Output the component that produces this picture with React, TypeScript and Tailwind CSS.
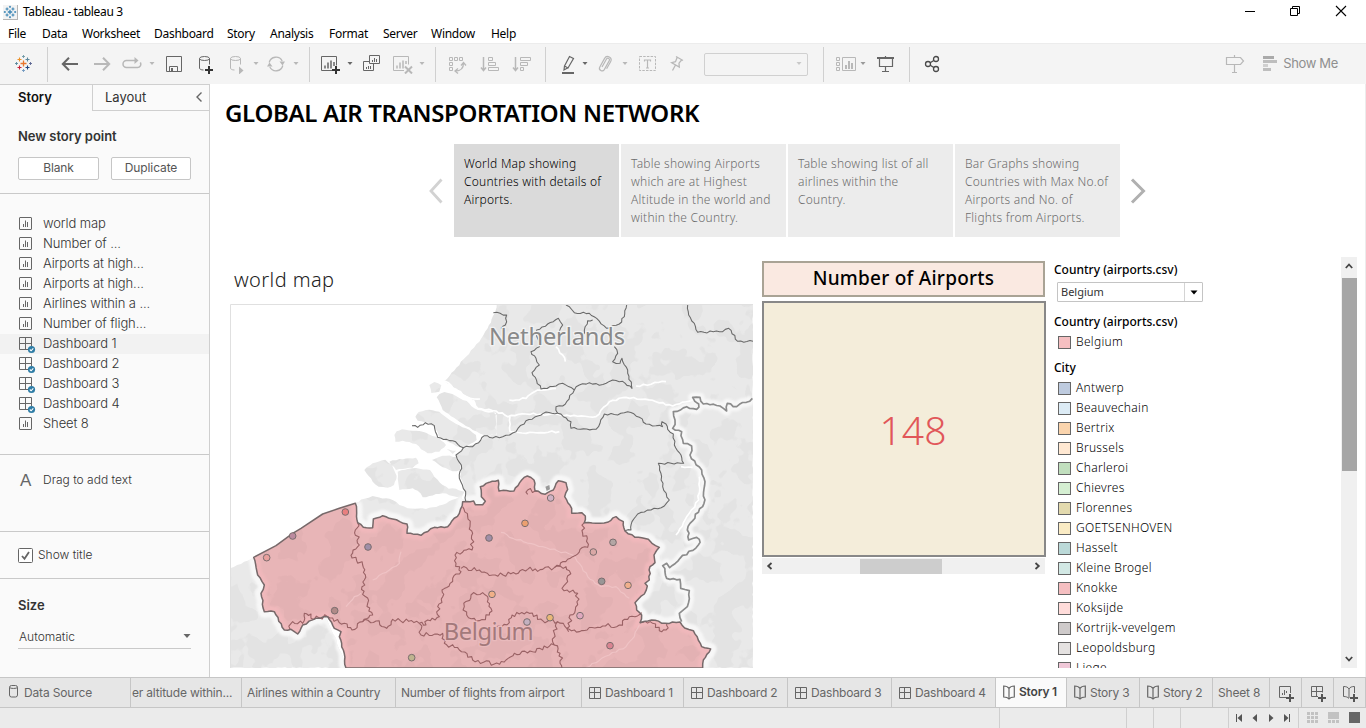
import React from "react";

type IconProps = { children: React.ReactNode; className?: string };

const ToolIcon = ({ children, className = "" }: IconProps) => (
  <svg width="20" height="20" viewBox="0 0 20 20" fill="none" stroke="currentColor" className={`shrink-0 ${className}`}>
    {children}
  </svg>
);

const Caret = ({ className = "" }: { className?: string }) => (
  <svg width="8" height="4" viewBox="0 0 8 4" fill="currentColor" className={`shrink-0 ${className}`}>
    <path d="M1.5 0h5L4 3z" />
  </svg>
);

const Sep = ({ className = "" }: { className?: string }) => (
  <div className={`h-[35px] w-px shrink-0 bg-[#d0d0d0] ${className}`} />
);

const plus = (x: number, y: number, s = 4) => (
  <path d={`M${x - s} ${y}h${2 * s}M${x} ${y - s}v${2 * s}`} stroke="#333" strokeWidth="2" />
);

const LogoMark = ({ mono }: { mono?: boolean }) => {
  const c = (v: string) => (mono ? "#3c86b5" : v);
  const cross = (x: number, y: number, s: number, col: string, w: number) => (
    <path d={`M${x - s} ${y}h${2 * s}M${x} ${y - s}v${2 * s}`} stroke={c(col)} strokeWidth={mono ? w * 1.35 : w} />
  );
  return (
    <>
      {cross(9.5, 9.5, 3, "#e8762d", 1.3)}
      {cross(5.5, 5.5, 2, "#eb9129", 1.1)}
      {cross(13.5, 5.5, 2, "#5b879b", 1.1)}
      {cross(5.5, 13.5, 2, "#c72037", 1.1)}
      {cross(13.5, 13.5, 2, "#1f447e", 1.1)}
      {cross(9.5, 2.5, 1.4, "#7099a6", 1)}
      {cross(9.5, 16.5, 1.4, "#7199c0", 1)}
      {cross(2.5, 9.5, 1.4, "#59879b", 1)}
      {cross(16.5, 9.5, 1.4, "#5c6692", 1)}
    </>
  );
};

const menus: [string, string][] = [
  ["File", "w-[34px]"],
  ["Data", "w-[40px]"],
  ["Worksheet", "w-[72px]"],
  ["Dashboard", "w-[73px]"],
  ["Story", "w-[43px]"],
  ["Analysis", "w-[59px]"],
  ["Format", "w-[54px]"],
  ["Server", "w-[48px]"],
  ["Window", "w-[60px]"],
  ["Help", "w-[40px]"],
];

function TitleBar() {
  return (
    <div className="flex h-6 items-center text-black">
      <div className="ml-[3px] flex h-[15px] w-[15px] items-center justify-center border-r border-b border-[#b5b5b5] bg-[#f3f3f3]">
        <svg width="14" height="14" viewBox="0 0 19 19">
          <LogoMark mono />
        </svg>
      </div>
      <span className="ml-[5px] text-[12px] tracking-[-0.35px]">Tableau - tableau 3</span>
      <svg className="mr-[19px] mb-[3px] ml-auto" width="102" height="12" viewBox="0 0 102 12" fill="none" stroke="#000">
        <path d="M0 6.500h10" />
        <path d="M45.500 3.500h7v7h-7zM47.500 3.500v-2h7v7h-2" />
        <path d="M91 1l10 10M101 1l-10 10" strokeWidth="1.100" />
      </svg>
    </div>
  );
}

function Toolbar() {
  return (
    <div className="flex h-[41px] items-center border-t border-[#ececec] bg-[#f4f4f4] text-[#b8b8b8]">
      <ToolIcon className="ml-[14px]">
        <LogoMark />
      </ToolIcon>
      <Sep className="ml-[13px]" />
      <ToolIcon className="ml-3 text-[#666]">
        <path d="M18 10H3M9 3.800L2.800 10L9 16.200" strokeWidth="2" />
      </ToolIcon>
      <ToolIcon className="ml-3">
        <path d="M2 10h15M11 3.800l6.200 6.200l-6.200 6.200" strokeWidth="2" />
      </ToolIcon>
      <ToolIcon className="ml-[10px]">
        <path d="M14 6.500H4.500a3.500 3.500 0 0 0 0 7H15.500a3.300 3.300 0 0 0 2.800-5" strokeWidth="1.500" />
        <path d="M12.500 3l4 3.500l-4 3.500z" fill="currentColor" stroke="none" />
      </ToolIcon>
      <Caret className="ml-[6px]" />
      <ToolIcon className="ml-2 text-[#666]">
        <path d="M2.500 2.500h15v15h-15zM5.500 17.500v-5h8v5" />
        <path d="M7 14h2v3h-2z" fill="currentColor" stroke="none" />
      </ToolIcon>
      <ToolIcon className="ml-3 text-[#666]">
        <ellipse cx="8.500" cy="4.500" rx="5" ry="2" />
        <path d="M3.500 4.500v9.500c0 1.200 1.500 2 4 2M13.500 4.500v6" />
        {plus(13, 16)}
      </ToolIcon>
      <ToolIcon className="ml-[10px]">
        <ellipse cx="9.500" cy="4.500" rx="5" ry="2" />
        <path d="M4.500 4.500v9.500c0 1.200 1.500 2 4 2M14.500 4.500v6" />
        <path d="M13 12.500l4.500 4l-4.500 4z" fill="currentColor" stroke="none" />
      </ToolIcon>
      <Caret className="ml-[6px]" />
      <ToolIcon className="ml-[6px]">
        <path d="M3.200 8.500a7 7 0 0 1 13-1.500M16.800 11.500a7 7 0 0 1-13 1.500" strokeWidth="1.300" />
        <path d="M13.500 7.500h5.500l-2.500 4zM6.500 12.500H1l2.500-4z" fill="currentColor" stroke="none" />
      </ToolIcon>
      <Caret className="ml-[6px]" />
      <Sep className="ml-[9px]" />
      <ToolIcon className="ml-[11px] text-[#666]">
        <path d="M11.500 16.500h-11v-14h15v9" />
        <path d="M4 14.500v-3M7 14.500v-6M10 14.500v-8M13 12v-4" strokeWidth="1.500" />
        {plus(15, 16)}
      </ToolIcon>
      <Caret className="ml-[5px] text-[#666]" />
      <ToolIcon className="ml-2 text-[#666]">
        <path d="M7.500 1.500h10v8h-10zM7.500 7.500h-6v9h10v-7" />
        <path d="M10.500 8v-2M12.500 8v-4M14.500 8v-3M4.500 15v-2M6.500 15v-3M8.500 15v-3" />
      </ToolIcon>
      <ToolIcon className="ml-[11px]">
        <path d="M11 16.500H.500v-14h15v8" />
        <path d="M4 14.500v-3M7 14.500v-6M10 14.500v-8M13 10v-3" strokeWidth="1.500" />
        <path d="M12 12.500l7 7M19 12.500l-7 7" strokeWidth="2" />
      </ToolIcon>
      <Caret className="ml-[5px]" />
      <Sep className="ml-[9px]" />
      <ToolIcon className="ml-[11px]">
        <path d="M2.500 3.500h3v3h-3zM7.500 3.500h3v3h-3zM12.500 3.500h3v3h-3zM2.500 8.500h3v3h-3zM2.500 13.500h3v3h-3z" />
        <path d="M8.500 17c5 0 8-3 8-8M14 11.500l2.500-3l2.500 3M11 14.500l-3 2.500l3 2.500" strokeWidth="1.300" />
      </ToolIcon>
      <ToolIcon className="ml-[13px]">
        <path d="M3.500 3v13M1 13.500l2.500 3l2.500-3" strokeWidth="1.500" />
        <path d="M8.500 3.500h4v3h-4zM8.500 8.500h7v3h-7zM8.500 13.500h10v3h-10z" />
      </ToolIcon>
      <ToolIcon className="ml-3">
        <path d="M3.500 3v13M1 13.500l2.500 3l2.500-3" strokeWidth="1.500" />
        <path d="M8.500 3.500h10v3h-10zM8.500 8.500h7v3h-7zM8.500 13.500h3v3h-3z" />
      </ToolIcon>
      <Sep className="ml-[13px]" />
      <ToolIcon className="ml-3 text-[#666]">
        <path d="M11.500 2.500l4 2l-5.500 9.500l-3.500-2zM6.500 12l-.500 4l3.500-2" strokeWidth="1.200" />
        <path d="M4 19h12" strokeWidth="2" />
      </ToolIcon>
      <Caret className="ml-[3px] text-[#666]" />
      <ToolIcon className="ml-[6px]">
        <path d="M7 13l4.500-8a1.600 1.600 0 0 1 2.800 1.600l-5 9a2.600 2.600 0 0 1-4.500-2.600l4.800-8.600a3.400 3.400 0 0 1 6 3.400l-4 7" strokeWidth="1.200" />
      </ToolIcon>
      <Caret className="ml-[6px]" />
      <ToolIcon className="ml-[9px]">
        <path d="M1.500 2.500h16v14h-16z" strokeDasharray="2.500 1.200" />
        <path d="M6.500 7.500v-1.500h6v1.500M9.500 6v8M8 14h3" strokeWidth="1.200" />
      </ToolIcon>
      <ToolIcon className="ml-[9px]">
        <path d="M9 2.500l7 4M10.200 3.200l-1.700 4.500l-3.800 1l7.600 4.400l-.300-3.900l3-3.700M8.500 11l-3 5.500" strokeWidth="1.300" />
      </ToolIcon>
      <div className="ml-[17px] flex h-[23px] w-[104px] shrink-0 items-center justify-end rounded-[2px] border border-[#d0d0d0] pr-1 text-[#c8c8c8]">
        <Caret />
      </div>
      <Sep className="ml-[15px]" />
      <ToolIcon className="ml-3">
        <path d="M.500 3.500h3v3h-3zM.500 8.500h3v3h-3zM.500 13.500h3v3h-3zM6.500 3.500h13v13h-13z" />
        <path d="M10 15v-4M13 15v-8M16 15v-6" strokeWidth="2" />
      </ToolIcon>
      <Caret className="ml-[3px] text-[#999]" />
      <ToolIcon className="ml-[9px] text-[#666]">
        <path d="M1 4h17" strokeWidth="2" />
        <path d="M3.500 4v8.500h13V4M9.500 2v2M9.500 12.500v5M6 17.500h7" strokeWidth="1.200" />
      </ToolIcon>
      <Sep className="ml-[13px]" />
      <ToolIcon className="ml-3 text-[#4a4a4a]">
        <circle cx="6" cy="10" r="2.500" strokeWidth="1.300" />
        <circle cx="14" cy="5" r="2.500" strokeWidth="1.300" />
        <circle cx="14" cy="15" r="2.500" strokeWidth="1.300" />
        <path d="M8.200 8.800l3.600-2.300M8.200 11.200l3.600 2.300" strokeWidth="1.300" />
      </ToolIcon>
      <ToolIcon className="ml-auto">
        <path d="M1.500 3.500h14l3 3.500l-3 3.500h-14zM9.500 1v2.500M9.500 10.500v8M7 18.500h5" strokeWidth="1.200" />
      </ToolIcon>
      <svg className="ml-[18px]" width="14" height="16" viewBox="0 0 14 16">
        <path d="M0 0h11v3H0z" fill="#aaa" />
        <path d="M0 4h14v3H0zM0 12h8v3H0z" fill="#bebebe" />
        <path d="M0 8h5v3H0z" fill="#d0d0d0" />
      </svg>
      <span className="mr-[28px] ml-[6px] font-['Inter','Liberation_Sans',sans-serif] text-[13px] tracking-[-0.35px] text-[#8f8f8f]">
        Show Me
      </span>
    </div>
  );
}

const SheetIcon = () => (
  <svg width="14" height="14" viewBox="0 0 14 14" fill="none" stroke="#666" className="shrink-0">
    <rect x=".5" y=".5" width="12" height="12" rx=".5" />
    <path d="M4.500 10V7M6.500 10V3.500M8.500 10V5" />
  </svg>
);

const GridIcon = ({ published }: { published?: boolean }) => (
  <svg width="17" height="17" viewBox="0 0 17 17" fill="none" stroke="#666" className="shrink-0">
    <path d="M.5.500h12v12H.500zM6.500.500v12M.500 6.500h12" />
    {published && (
      <>
        <circle cx="12.500" cy="12.500" r="3.600" fill="#2e7ca5" stroke="none" />
        <path d="M10.800 12.500l1.300 1.300l2.200-2.500" stroke="#fff" strokeWidth="1.100" />
      </>
    )}
  </svg>
);

const sheets: [string, boolean][] = [
  ["world map", false],
  ["Number of ...", false],
  ["Airports at high...", false],
  ["Airports at high...", false],
  ["Airlines within a ...", false],
  ["Number of fligh...", false],
  ["Dashboard 1", true],
  ["Dashboard 2", true],
  ["Dashboard 3", true],
  ["Dashboard 4", true],
  ["Sheet 8", false],
];

function SidePanel() {
  return (
    <aside className="flex w-[210px] shrink-0 flex-col border-t border-r border-[#cfcfcf] bg-[#fafafa] font-['Inter','Liberation_Sans',sans-serif] text-[13px] text-[#333]">
      <div className="flex h-[26px] shrink-0">
        <div className="w-[92px] pt-[3px] pl-[18px] font-semibold text-[#111]">Story</div>
        <div className="flex flex-1 items-start justify-between border-b border-l border-[#cfcfcf] pt-[3px] pr-[6px] pl-3">
          <span>Layout</span>
          <svg width="8" height="12" viewBox="0 0 8 12" fill="none" stroke="#666" strokeWidth="1.400" className="mt-[3px]">
            <path d="M6.500 1.500L2 6l4.500 4.500" />
          </svg>
        </div>
      </div>
      <div className="h-[83px] shrink-0 border-b border-[#c9c9c9] px-[18px] pt-4">
        <div className="font-semibold tracking-[-0.05px] text-[#333]">New story point</div>
        <div className="mt-[10px] flex gap-3 text-[12px] tracking-[-0.1px] text-[#555]">
          <div className="flex h-[23px] w-[81px] items-center justify-center rounded-[2px] border border-[#c6c6c6] bg-white">Blank</div>
          <div className="flex h-[23px] w-[80px] items-center justify-center rounded-[2px] border border-[#c6c6c6] bg-white">Duplicate</div>
        </div>
      </div>
      <div className="h-[261px] shrink-0 border-b border-[#c9c9c9] pt-5 font-light">
        {sheets.map(([name, dash], i) => (
          <div key={i} className={`flex h-5 items-center ${i === 6 ? "bg-[#f2f2f2]" : ""}`}>
            <span className="flex h-5 w-[43px] shrink-0 pt-[3px] pl-[19px]">{dash ? <GridIcon published /> : <SheetIcon />}</span>
            <span className="tracking-[-0.12px]">{name}</span>
          </div>
        ))}
      </div>
      <div className="flex h-[77px] shrink-0 border-b border-[#c9c9c9] pt-4 text-[12px] text-[#333]">
        <span className="w-[43px] pl-5 font-['Liberation_Sans',sans-serif] text-[17px] leading-[20px] text-[#666]">A</span>
        <span className="leading-[18px] font-light">Drag to add text</span>
      </div>
      <div className="flex h-[47px] shrink-0 items-center gap-[5px] border-b border-[#c9c9c9] pl-[18px] text-[12px] text-[#333]">
        <svg width="15" height="15" viewBox="0 0 15 15" fill="#fff" stroke="#666">
          <rect x=".5" y=".5" width="14" height="14" rx="1" />
          <path d="M4 8l2.500 2.800L11 4" fill="none" strokeWidth="1.800" />
        </svg>
        <span className="font-light">Show title</span>
      </div>
      <div className="px-[18px] pt-[17px]">
        <div className="text-[13px] font-semibold text-[#333]">Size</div>
        <div className="mt-[10px] flex h-[23px] items-center justify-between border-b border-[#c9c9c9] pl-px text-[12px] text-[#333]">
          <span className="font-light">Automatic</span>
          <svg width="8" height="5" viewBox="0 0 8 5" fill="#666">
            <path d="M.5 0h7L4 4z" />
          </svg>
        </div>
      </div>
    </aside>
  );
}

const points: [string[], boolean][] = [
  [["World Map showing", "Countries with details of", "Airports."], true],
  [["Table showing Airports", "which are at Highest", "Altitude in the world and", "within the Country."], false],
  [["Table showing list of all", "airlines within the", "Country."], false],
  [["Bar Graphs showing", "Countries with Max No.of", "Airports and No. of", "Flights from Airports."], false],
];

function StoryNav() {
  return (
    <div className="flex h-[93px] shrink-0 items-center pl-[219px]">
      <svg width="14" height="26" viewBox="0 0 14 26" fill="none" stroke="#d2d2d2" strokeWidth="2.800">
        <path d="M12.500 1.500L2 13l10.500 11.500" />
      </svg>
      <div className="ml-[11px] flex gap-[2px] text-[12px] leading-[18px] tracking-[0.24px]">
        {points.map(([lines, active], i) => (
          <div
            key={i}
            className={`h-[93px] w-[165px] pt-[11px] pl-[10px] font-light whitespace-nowrap ${active ? "bg-[#dadada] text-[#000]" : "bg-[#ececec] text-[#6c6c6c]"}`}
          >
            {lines.map((l) => (
              <div key={l}>{l}</div>
            ))}
          </div>
        ))}
      </div>
      <svg className="ml-[10px]" width="16" height="26" viewBox="0 0 16 26" fill="none" stroke="#b0b0b0" strokeWidth="3">
        <path d="M2 1.500L13.500 13L2 24.500" />
      </svg>
    </div>
  );
}

/* Adds a small deterministic wobble along every segment of an M/L/Z path. */
function wobble(d: string, amp: number, step = 11): string {
  let seed = 17;
  const rnd = () => {
    seed = (seed * 16807) % 2147483647;
    return seed / 2147483647 - 0.5;
  };
  return d.replace(/M[^M]*/g, (sub) => {
    const closed = sub.trim().endsWith("Z");
    const n = (sub.match(/-?\d+(\.\d+)?/g) || []).map(Number);
    const pts: [number, number][] = [];
    for (let i = 0; i + 1 < n.length; i += 2) pts.push([n[i], n[i + 1]]);
    if (closed) pts.push(pts[0]);
    let out = `M${pts[0][0]} ${pts[0][1]}`;
    for (let i = 1; i < pts.length; i++) {
      const [x0, y0] = pts[i - 1];
      const [x1, y1] = pts[i];
      const len = Math.hypot(x1 - x0, y1 - y0) || 1;
      const k = Math.max(1, Math.round(len / step));
      for (let j = 1; j < k; j++) {
        const t = j / k;
        const o = rnd() * 2 * amp;
        out += `L${(x0 + (x1 - x0) * t - ((y1 - y0) / len) * o).toFixed(1)} ${(y0 + (y1 - y0) * t + ((x1 - x0) / len) * o).toFixed(1)}`;
      }
      out += `L${x1} ${y1}`;
    }
    return out + (closed ? "Z" : "");
  });
}

const LAND = wobble(
  "M812 12L806 40L785 85L760 125L720 170L655 243L700 272L740 300L755 325L800 333L812 345L812 404L775 408L755 430L712 443L690 465L705 500L702 530L718 575L722 640L722 1104L1581 1104L1581 12Z" +
    "M632 292L640 282L655 276L690 288L722 303L745 325L778 336L810 338L810 405L775 405L740 390L700 365L668 342L650 330Z" +
    "M568 350L578 336L600 330L640 335L680 365L720 385L750 405L752 420L725 438L700 442L660 422L638 408L626 382L608 368L575 362Z" +
    "M505 405L512 394L528 388L560 392L600 398L640 415L660 435L640 455L605 460L585 448L570 432L530 422L508 425Z" +
    "M490 485L520 477L570 473L578 490L560 503L510 510Z" +
    "M415 510L440 490L478 479L498 495L512 528L504 555L485 563L458 560L440 545Z" +
    "M515 515L560 505L612 510L625 530L642 548L668 566L690 566L716 575L706 594L680 588L650 580L610 588L590 592L575 572L560 565L520 570Z" +
    "M618 480L650 467L692 470L700 490L703 510L680 514L650 502Z" +
    "M662 447L690 452L680 462Z" +
    "M610 255L625 246L646 256L640 275L616 279Z" +
    "M388 608L415 596L440 588L500 600L520 615L545 625L600 627L650 614L700 592L722 602L722 700L400 700Z" +
    "M12 805L45 792L85 772L200 900L300 950L365 1104L12 1104Z",
  2,
);

const NORTH_BORDER = wobble(
  "M388 610L392 640L395 668L412 682L440 683L442 657L470 647L500 657L543 672L543 700L585 706L625 682L665 680L700 640L710 605L743 603L748 614L770 614L778 604L766 590L763 560L790 547L817 541L819 573L864 573L887 540L904 528L924 540L927 572L957 583L982 570L997 542L1020 548L1025 568L1016 590L1037 625L1037 640L1067 638L1078 648L1075 668L1122 670L1147 666L1170 650L1192 665L1197 693L1227 712L1267 718L1278 730L1300 742L1284 765L1287 788L1272 800L1270 840L1257 850L1264 858L1255 882L1227 908L1232 930L1247 945L1242 968L1277 960L1317 970L1362 966L1376 984L1402 992L1427 1040L1454 1047L1432 1080L1430 1104",
  2.2,
);
const SOUTH_BORDER = wobble(
  "M360 1104L352 1050L340 1010L345 995L325 985L305 950L270 955L230 975L215 1002L195 988L175 990L145 935L115 935L105 880L115 855L95 825L83 772",
  2.2,
);
const BELGIUM =
  "M83 772L150 737L200 700L225 685L290 642L340 625L" + NORTH_BORDER.slice(1) + "L" + SOUTH_BORDER.slice(1) + "Z";

const GERMAN_BORDER = wobble(
  "M1579 295L1532 320L1504 310L1502 333L1482 318L1432 312L1422 292L1400 292L1418 312L1412 328L1382 320L1342 335L1347 360L1340 385L1367 395L1372 430L1397 438L1392 465L1427 510L1437 545L1434 610L1392 670L1384 690L1388 720L1412 712L1420 718L1417 735L1362 775L1331 803L1322 790L1310 797L1322 835L1362 838L1364 865L1390 872L1384 920L1360 940L1367 965",
  4,
);

const NL_PROVINCES = [
  "M558 377L575 382L598 368L625 377L635 412L680 422L712 443L740 440L758 428L775 407L800 414L830 410L870 395L900 362L935 348L960 336L995 340",
  "M712 443L690 465L706 495L700 535L719 575L719 603",
  "M995 340L1012 350L1035 365L1035 385L1110 388L1122 370L1135 342L1175 345L1205 335L1240 352L1260 372L1310 380",
  "M995 340L990 320L1010 318L1022 305L1045 270L1010 250L990 258L945 267L928 232L918 218L940 195L930 175L915 155L940 140L932 90L965 72L997 55L1010 75L1000 95",
  "M1045 270L1060 255L1090 248L1120 256L1160 240L1190 244L1218 265L1205 210L1188 175L1182 190L1160 185L1175 160L1165 140",
  "M1020 15L1045 38L1090 40L1112 55L1142 85L1180 72L1195 50L1202 15M1100 60L1085 62L1075 90L1068 115",
  "M802 38L842 45L838 75L825 85M1385 15L1388 45L1405 70L1415 97L1490 95L1508 85L1535 124L1581 124",
  "M1310 380L1308 365L1320 372L1325 388L1342 402L1345 435L1365 465L1373 490L1297 490L1310 560L1330 600L1315 618L1235 642L1218 665L1215 690L1197 692",
].map((d) => wobble(d, 3, 10));

const PROVINCES = [
  "M395 668L388 690L400 735L375 766L410 795L415 840L408 860L425 910L440 945L410 965L378 990L355 970L305 950",
  "M410 965L450 963L482 985L500 958L580 970L600 975L605 960L640 950L635 920L650 890L648 870L672 850L680 835L705 815L690 790L687 765L738 750L740 700L725 650L710 620",
  "M705 805L760 810L800 825L870 822L905 808L950 808L985 803L1010 785L1040 770L1062 748L1085 742L1084 715L1070 700L1075 668",
  "M985 803L1020 800L1030 812L1025 845L1008 865L1055 880L1048 930L1032 945L1028 995",
  "M580 970L585 1005L650 1000L655 1030L700 1050L740 1080L805 1092L840 1080L865 1060L920 1055L985 1035L985 1000L995 965L1022 985L1060 995L1130 978L1180 975L1205 958L1247 938",
  "M985 1035L1002 1060L1008 1104M810 980L850 968L858 945L910 940L950 962L995 965",
  "M715 920L735 885L770 878L785 890L795 925L790 945L760 962L722 945Z",
  "M192 988L200 965L230 970L235 940L255 942L255 955L305 950M1242 968L1280 970L1300 992L1320 990L1322 970M905 583L905 570L935 574",
].map((d) => wobble(d, 6.5, 8));

const RIVERS = wobble(
  "M655 243L720 290L745 297L762 297M742 300L755 325L810 333L845 350L900 342L1000 344L1110 350L1150 305L1200 292L1290 305L1340 318L1400 300M852 350L852 395L900 400L1000 395M850 300L900 295L935 270L990 265M990 140L1010 165L1018 185M1230 258L1320 245M1420 530L1418 600L1390 640L1350 705M1365 500L1400 502",
  3,
);
const INNER_RIVERS = wobble(
  "M825 697L860 715L950 740L1040 765L1085 830L1125 860L1170 860L1210 895M360 920L385 890L405 880M440 840L490 810L520 790L525 755M1080 1104L1150 1065L1200 1040L1225 1010L1240 975",
  3,
);

const dots: [number, number, string][] = [
  [122, 773, "#e9a09d"],
  [200, 708, "#bb8a9f"],
  [358, 636, "#e87f7f"],
  [426, 741, "#a08fa8"],
  [326, 932, "#b08a88"],
  [557, 1073, "#bfb48f"],
  [789, 714, "#a08fa8"],
  [798, 883, "#f0b088"],
  [897, 670, "#eca070"],
  [974, 594, "#cfb2c4"],
  [1102, 756, "#d9a8a6"],
  [1161, 727, "#b3a6a4"],
  [1127, 844, "#999696"],
  [1206, 856, "#f0b08c"],
  [972, 953, "#e8b878"],
  [903, 966, "#c3b1c0"],
  [1062, 947, "#dfa9bf"],
  [1152, 1037, "#d98491"],
];

function WorldMap() {
  return (
    <svg width="523" height="364" viewBox="12 12 1569 1092" className="block shrink-0 bg-white">
      <defs>
        <filter id="terrain" x="0" y="0" width="100%" height="100%">
          <feTurbulence type="fractalNoise" baseFrequency="0.013" numOctaves="3" seed="9" />
          <feColorMatrix values="0 0 0 0 0  0 0 0 0 0  0 0 0 0 0  24 0 0 0 -12.200" />
        </filter>
        <filter id="soft" x="-5%" y="-5%" width="110%" height="110%">
          <feGaussianBlur stdDeviation="3" />
        </filter>
        <clipPath id="land">
          <path d={LAND} />
        </clipPath>
        <clipPath id="country">
          <path d={BELGIUM} />
        </clipPath>
      </defs>
      <path d={LAND} fill="#e9e9e9" />
      <g clipPath="url(#land)">
        <rect x="12" y="12" width="1569" height="1092" filter="url(#terrain)" opacity=".025" />
        <g fill="none" stroke="#f7f7f7" strokeWidth="36" strokeLinejoin="round" filter="url(#soft)">
          <path d={NORTH_BORDER} />
          <path d={SOUTH_BORDER} />
          <path d={GERMAN_BORDER} strokeWidth="28" />
        </g>
      </g>
      <g fill="none" strokeLinejoin="round">
        <path d={RIVERS} stroke="#fff" strokeWidth="5" />
        {NL_PROVINCES.map((d) => (
          <path key={d} d={d} stroke="#6a6a6a" strokeWidth="3.200" />
        ))}
        <path d={GERMAN_BORDER} stroke="#8c8c8c" strokeWidth="5" />
      </g>
      <path d={BELGIUM} fill="#e8b5b7" />
      <g clipPath="url(#country)">
        <rect x="12" y="12" width="1569" height="1092" filter="url(#terrain)" opacity=".02" />
        <g fill="none" stroke="#f0b8bb" strokeWidth="30" filter="url(#soft)">
          <path d={NORTH_BORDER} />
          <path d={SOUTH_BORDER} />
        </g>
      </g>
      <g fill="none" strokeLinejoin="round">
        <path d={INNER_RIVERS} stroke="#efc3c5" strokeWidth="3.500" />
        {PROVINCES.map((d) => (
          <path key={d} d={d} stroke="#9a6265" strokeWidth="3.300" />
        ))}
      </g>
      <path d={BELGIUM} fill="none" stroke="#77696a" strokeWidth="4.500" strokeLinejoin="round" />
      <path d="M958 560L970 555L972 568L962 573Z" fill="#999" />
      <g fontFamily="'Noto Sans', sans-serif" fontSize="71">
        <text x="789" y="134" textLength="408" fill="#898989" stroke="#f2f2f2" strokeWidth="8" paintOrder="stroke">
          Netherlands
        </text>
        <text x="653" y="1020" textLength="270" fill="#a3797b" stroke="#e9babc" strokeWidth="8" paintOrder="stroke">
          Belgium
        </text>
      </g>
      {dots.map(([x, y, c]) => (
        <circle key={`${x}-${y}`} cx={x} cy={y} r="10" fill={c} stroke="#7b6d6e" strokeWidth="3" />
      ))}
      <path d="M13.500 1104V13.500H1581" fill="none" stroke="#e0e0e0" strokeWidth="3" />
    </svg>
  );
}

const cities: [string, string][] = [
  ["Antwerp", "bg-[#becbdf]"],
  ["Beauvechain", "bg-[#dcebf5]"],
  ["Bertrix", "bg-[#fad4ad]"],
  ["Brussels", "bg-[#ffe8d2]"],
  ["Charleroi", "bg-[#c1dfbe]"],
  ["Chievres", "bg-[#d5efd2]"],
  ["Florennes", "bg-[#e3daae]"],
  ["GOETSENHOVEN", "bg-[#faebc4]"],
  ["Hasselt", "bg-[#bbd9d8]"],
  ["Kleine Brogel", "bg-[#d2e8e4]"],
  ["Knokke", "bg-[#f5bfc1]"],
  ["Koksijde", "bg-[#ffdcda]"],
  ["Kortrijk-vevelgem", "bg-[#cecaca]"],
  ["Leopoldsburg", "bg-[#e5e2e1]"],
  ["Liege", "bg-[#f0c8d8]"],
];

const LegendItem = ({ name, color }: { name: string; color: string }) => (
  <div className="flex h-5 shrink-0 items-center gap-[5px] pl-1">
    <span className={`h-[13px] w-[13px] shrink-0 border border-[#666] ${color}`} />
    <span className="font-light tracking-[0.3px] whitespace-nowrap text-black">{name}</span>
  </div>
);

function Filters() {
  return (
    <div className="flex w-[287px] shrink-0 flex-col overflow-hidden pl-2 text-[12px] leading-[20px]">
      <div className="pt-[3px] font-medium text-black">Country (airports.csv)</div>
      <div className="mt-[2px] ml-[3px] flex h-5 w-[146px] shrink-0 items-center rounded-[1px] border border-[#c4c4c4] bg-white text-[11px]">
        <span className="flex-1 pl-[3px] text-[#333]">Belgium</span>
        <span className="flex h-full w-[18px] items-center justify-center border-l border-[#d4d4d4]">
          <svg width="8" height="5" viewBox="0 0 8 5">
            <path d="M.5.500h7L4 4.500z" />
          </svg>
        </span>
      </div>
      <div className="mt-[10px] font-medium text-black">Country (airports.csv)</div>
      <LegendItem name="Belgium" color="bg-[#f5bfc1]" />
      <div className="mt-[6px] font-medium text-black">City</div>
      {cities.map(([n, c]) => (
        <LegendItem key={n} name={n} color={c} />
      ))}
    </div>
  );
}

const Chevron = ({ d, w = 10, h = 10 }: { d: string; w?: number; h?: number }) => (
  <svg width={w} height={h} viewBox="0 0 10 10" fill="none" stroke="#444" strokeWidth="1.800">
    <path d={d} />
  </svg>
);

function Dashboard() {
  return (
    <div className="mt-5 flex h-[411px] shrink-0 pl-5">
      <div className="flex w-[523px] shrink-0 flex-col">
        <div className="h-[47px] shrink-0 pt-[8px] pl-[4px] text-[20px] leading-[30px] font-light tracking-[0.4px] text-[#222]">
          world map
        </div>
        <WorldMap />
      </div>
      <div className="ml-[9px] flex w-[284px] shrink-0 flex-col pt-1">
        <div className="flex h-9 w-[283px] items-center justify-center border-2 border-[#a9a395] bg-[#fae9e1] pb-[2px] text-[19px] font-medium tracking-[0.25px] text-black">
          Number of Airports
        </div>
        <div className="mt-1 flex h-[256px] items-center justify-center border-2 border-[#888] bg-[#f4edda] pb-[2px] pl-[18px] text-[39px] font-light text-[#e15759]">
          <span className="pt-1">148</span>
        </div>
        <div className="mt-px flex h-4 w-[283px] items-center bg-[#f0f0f0] px-[3px]">
          <Chevron d="M6.500 2L3.200 5l3.300 3" />
          <div className="ml-[85px] h-[15px] w-[82px] bg-[#cdcdcd]" />
          <span className="ml-auto">
            <Chevron d="M3.500 2l3.300 3l-3.300 3" />
          </span>
        </div>
      </div>
      <Filters />
      <div className="ml-[8px] flex h-full w-[16px] shrink-0 flex-col items-center bg-[#f0f0f0] py-1">
        <Chevron d="M1.800 7L5 3.500L8.200 7" />
        <div className="mt-[7px] h-[193px] w-[15px] bg-[#a6a6a6]" />
        <div className="mt-auto h-[10px]">
          <Chevron d="M1.800 3L5 6.500L8.200 3" />
        </div>
      </div>
    </div>
  );
}

const SmallGrid = () => (
  <svg width="12" height="12" viewBox="0 0 12 12" fill="none" stroke="#666" className="shrink-0">
    <path d="M.5.500h11v11H.500zM5.500 .500v11M.500 5.500h11" />
  </svg>
);
const Book = () => (
  <svg width="12" height="15" viewBox="0 0 12 15" fill="none" stroke="#666" strokeWidth="1.200" className="shrink-0">
    <path d="M6 3.500v10M6 3.500C4.800 1.500 3 1 .700 1v11c2 0 4 .300 5.300 2c1.300-1.700 3.300-2 5.300-2V1C9 1 7.200 1.500 6 3.500" />
  </svg>
);

type Tab = { t: string; w: string; icon?: "grid" | "book"; active?: boolean };
const tabs: Tab[] = [
  { t: "er altitude within...", w: "w-[111px] pl-px" },
  { t: "Airlines within a Country", w: "w-[154px] pl-[5px]" },
  { t: "Number of flights from airport", w: "w-[186px] pl-[5px]" },
  { t: "Dashboard 1", w: "w-[102px] pl-[7px]", icon: "grid" },
  { t: "Dashboard 2", w: "w-[104px] pl-[7px]", icon: "grid" },
  { t: "Dashboard 3", w: "w-[104px] pl-[7px]", icon: "grid" },
  { t: "Dashboard 4", w: "w-[104px] pl-[7px]", icon: "grid" },
  { t: "Story 1", w: "w-[71px] pl-[7px]", icon: "book", active: true },
  { t: "Story 3", w: "w-[73px] pl-[7px]", icon: "book" },
  { t: "Story 2", w: "w-[73px] pl-[7px]", icon: "book" },
  { t: "Sheet 8", w: "w-[57px] pl-[5px]" },
];

const NewTab = ({ w, children }: { w: string; children: React.ReactNode }) => (
  <div className={`flex shrink-0 items-center justify-center border-r border-[#c6c6c6] pt-px ${w}`}>
    <svg width="16" height="17" viewBox="0 0 16 17" fill="none" stroke="#666">
      {children}
      <path d="M8 13h8M12 9v8" stroke="#555" strokeWidth="2" />
    </svg>
  </div>
);

function BottomBar() {
  return (
    <>
      <div className="flex h-[31px] shrink-0 border-t border-b border-[#c6c6c6] bg-[#e6e6e6] font-['Inter','Liberation_Sans',sans-serif] text-[12px] tracking-[-0.2px] text-[#666]">
        <div className="flex w-[131px] shrink-0 items-center gap-[6px] border-r border-[#c6c6c6] pl-[9px]">
          <svg width="9" height="13" viewBox="0 0 9 13" fill="none" stroke="#666" className="mb-[2px]">
            <rect x=".5" y=".5" width="8" height="11.500" rx="2" />
            <path d="M.5 2.500c1 1.300 7 1.300 8 0" />
          </svg>
          <span className="tracking-[-0.15px]">Data Source</span>
        </div>
        {tabs.map((tab) => (
          <div
            key={tab.t}
            className={`flex shrink-0 items-center gap-1 overflow-hidden border-r border-[#c6c6c6] whitespace-nowrap ${tab.w} ${tab.active ? "bg-[#fafafa] pb-px font-semibold text-[#444]" : ""}`}
          >
            {tab.icon === "grid" && <SmallGrid />}
            {tab.icon === "book" && <Book />}
            <span>{tab.t}</span>
          </div>
        ))}
        <NewTab w="w-8">
          <path d="M8 12.500H1.500V1.500h11V8M4.500 10V8M6.500 10V5M8.500 8V6" />
        </NewTab>
        <NewTab w="w-8">
          <path d="M8 11.500H1.500V1.500h11V7.500M6.500 1.500v10M1.500 6.500h11" />
        </NewTab>
        <NewTab w="w-8">
          <path d="M7 4v9M7 4C6 2 4 1.500 1.500 1.500v10c2.500 0 4 .500 5.500 2M7 4c1-2 3-2.500 5.500-2.500V8" />
        </NewTab>
      </div>
      <div className="flex h-5 shrink-0 bg-[#ebebeb]">
        <div className="w-[1000px] border-r border-[#cfcfcf]" />
        <div className="w-[127px] border-r border-[#cfcfcf]" />
        <div className="w-[27px] border-r border-[#cfcfcf]" />
        <div className="w-[27px] border-r border-[#cfcfcf]" />
        <div className="w-[48px] border-r border-[#cfcfcf]" />
        <div className="flex w-[70px] items-center border-r border-[#cfcfcf] pb-px pl-[7px]">
          <svg width="56" height="8" viewBox="0 0 56 8" fill="#555">
            <path d="M0 0h1v8H0zM6 0v8L1.500 4zM21 0v8L16.500 4zM33 0v8L37.500 4zM48 0v8L52.500 4zM53 0h1v8h-1z" />
          </svg>
        </div>
        <svg className="mt-[4px] ml-2" width="54" height="12" viewBox="0 0 54 12" fill="#c2c2c2">
          <path d="M0 0h3v3H0zM4 0h3v3H4zM8 0h3v3H8zM0 4h3v3H0zM4 4h3v3H4zM8 4h3v3H8zM0 8h3v3H0zM4 8h3v3H4zM8 8h3v3H8zM21 0h11v7H21zM21 8h3v3h-3zM25 8h3v3h-3zM29 8h3v3h-3z" />
          <path d="M42 0h11v11H42z" fill="#666" />
        </svg>
      </div>
    </>
  );
}

export default function App() {
  return (
    <div className="flex h-[728px] w-[1366px] flex-col overflow-hidden bg-white font-['Noto_Sans','Open_Sans',sans-serif]">
      <TitleBar />
      <div className="flex h-[19px] items-center pl-2 text-[12px] tracking-[-0.28px] text-black">
        {menus.map(([m, w]) => (
          <span key={m} className={w}>
            {m}
          </span>
        ))}
      </div>
      <Toolbar />
      <div className="flex h-[593px] shrink-0">
        <SidePanel />
        <main className="flex min-w-0 flex-1 flex-col border-r border-[#ececec]">
          <h1 className="h-[60px] shrink-0 pt-[11px] pl-[15px] text-[24px] leading-[36px] font-semibold tracking-[-0.33px] whitespace-nowrap text-black">
            GLOBAL AIR TRANSPORTATION NETWORK
          </h1>
          <StoryNav />
          <Dashboard />
        </main>
      </div>
      <BottomBar />
    </div>
  );
}
